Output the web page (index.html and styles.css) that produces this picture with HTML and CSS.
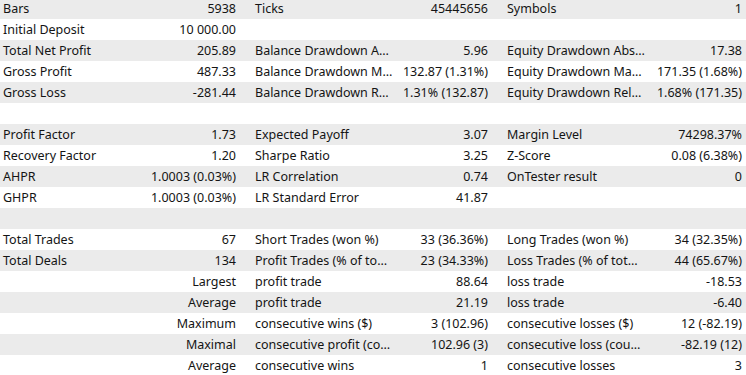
FILE: index.html
```html
<!DOCTYPE html>
<html>
<head>
<meta charset="utf-8">
<link rel="stylesheet" href="styles.css">
</head>
<body>
<div class="report">
  <div class="row"><span class="lbl">Bars</span><span class="val">5938</span><span class="lbl l2">Ticks</span><span class="val">45445656</span><span class="lbl l3">Symbols</span><span class="val">1</span></div>
  <div class="row"><span class="lbl">Initial Deposit</span><span class="val">10 000.00</span><span class="lbl l2"></span><span class="val"></span><span class="lbl l3"></span><span class="val"></span></div>
  <div class="row"><span class="lbl">Total Net Profit</span><span class="val">205.89</span><span class="lbl l2">Balance Drawdown A…</span><span class="val">5.96</span><span class="lbl l3">Equity Drawdown Abs…</span><span class="val">17.38</span></div>
  <div class="row"><span class="lbl">Gross Profit</span><span class="val">487.33</span><span class="lbl l2">Balance Drawdown M…</span><span class="val">132.87 (1.31%)</span><span class="lbl l3">Equity Drawdown Ma…</span><span class="val">171.35 (1.68%)</span></div>
  <div class="row"><span class="lbl">Gross Loss</span><span class="val">-281.44</span><span class="lbl l2">Balance Drawdown R…</span><span class="val">1.31% (132.87)</span><span class="lbl l3">Equity Drawdown Rel…</span><span class="val">1.68% (171.35)</span></div>
  <div class="row"><span class="lbl"></span><span class="val"></span><span class="lbl l2"></span><span class="val"></span><span class="lbl l3"></span><span class="val"></span></div>
  <div class="row"><span class="lbl">Profit Factor</span><span class="val">1.73</span><span class="lbl l2">Expected Payoff</span><span class="val">3.07</span><span class="lbl l3">Margin Level</span><span class="val">74298.37%</span></div>
  <div class="row"><span class="lbl">Recovery Factor</span><span class="val">1.20</span><span class="lbl l2">Sharpe Ratio</span><span class="val">3.25</span><span class="lbl l3">Z-Score</span><span class="val">0.08 (6.38%)</span></div>
  <div class="row"><span class="lbl">AHPR</span><span class="val">1.0003 (0.03%)</span><span class="lbl l2">LR Correlation</span><span class="val">0.74</span><span class="lbl l3">OnTester result</span><span class="val">0</span></div>
  <div class="row"><span class="lbl">GHPR</span><span class="val">1.0003 (0.03%)</span><span class="lbl l2">LR Standard Error</span><span class="val">41.87</span><span class="lbl l3"></span><span class="val"></span></div>
  <div class="row"><span class="lbl"></span><span class="val"></span><span class="lbl l2"></span><span class="val"></span><span class="lbl l3"></span><span class="val"></span></div>
  <div class="row"><span class="lbl">Total Trades</span><span class="val">67</span><span class="lbl l2">Short Trades (won %)</span><span class="val">33 (36.36%)</span><span class="lbl l3">Long Trades (won %)</span><span class="val">34 (32.35%)</span></div>
  <div class="row"><span class="lbl">Total Deals</span><span class="val">134</span><span class="lbl l2">Profit Trades (% of to…</span><span class="val">23 (34.33%)</span><span class="lbl l3">Loss Trades (% of tot…</span><span class="val">44 (65.67%)</span></div>
  <div class="row"><span class="lbl"></span><span class="val">Largest</span><span class="lbl l2">profit trade</span><span class="val">88.64</span><span class="lbl l3">loss trade</span><span class="val">-18.53</span></div>
  <div class="row"><span class="lbl"></span><span class="val">Average</span><span class="lbl l2">profit trade</span><span class="val">21.19</span><span class="lbl l3">loss trade</span><span class="val">-6.40</span></div>
  <div class="row"><span class="lbl"></span><span class="val">Maximum</span><span class="lbl l2">consecutive wins ($)</span><span class="val">3 (102.96)</span><span class="lbl l3">consecutive losses ($)</span><span class="val">12 (-82.19)</span></div>
  <div class="row"><span class="lbl"></span><span class="val">Maximal</span><span class="lbl l2">consecutive profit (co…</span><span class="val">102.96 (3)</span><span class="lbl l3">consecutive loss (cou…</span><span class="val">-82.19 (12)</span></div>
  <div class="row"><span class="lbl"></span><span class="val">Average</span><span class="lbl l2">consecutive wins</span><span class="val">1</span><span class="lbl l3">consecutive losses</span><span class="val">3</span></div>
</div>
</body>
</html>
```

FILE: styles.css
```css
html, body {
  margin: 0;
  padding: 0;
  background: #ffffff;
}
body {
  font-family: "Noto Sans", "Noto Sans CJK SC", sans-serif;
  font-size: 12.5px;
  color: #141414;
  overflow: hidden;
}
.report {
  margin-top: -2px;
}
.row {
  display: grid;
  grid-template-columns: 150px 90px 152px 100px 156px 98px;
  height: 21px;
  line-height: 21px;
}
.row:nth-child(odd) {
  background: #ebebeb;
}
.lbl, .val {
  white-space: nowrap;
  overflow: hidden;
}
.lbl {
  padding-left: 3px;
}
.lbl.l2, .lbl.l3 {
  padding-left: 15px;
}
.val {
  text-align: right;
  padding-right: 4px;
}
```
